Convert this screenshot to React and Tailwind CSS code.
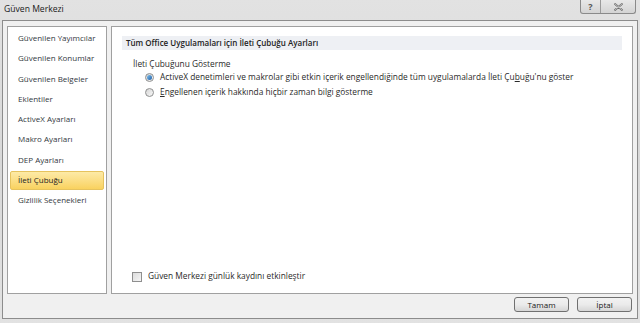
import React from "react";

const items = [
  "Güvenilen Yayımcılar",
  "Güvenilen Konumlar",
  "Güvenilen Belgeler",
  "Eklentiler",
  "ActiveX Ayarları",
  "Makro Ayarları",
  "DEP Ayarları",
  "İleti Çubuğu",
  "Gizlilik Seçenekleri",
];

export default function App() {
  return (
    <div
      className="w-[640px] h-[323px] flex flex-col bg-gradient-to-b from-[#e2e2e2] via-[#d8d8d8] to-[#e2e2e2] text-[8px] text-[#2a2a2a] overflow-hidden"
      style={{ fontFamily: '"Open Sans", "Noto Sans", sans-serif' }}
    >
      <TitleBar />
      <div className="mx-[2px] h-[299px] border border-[#8c8c8c] bg-[#f0f0f0] flex flex-col px-[4px] pt-[5px]">
        <div className="flex gap-[4px] h-[268px]">
          <Sidebar />
          <Content />
        </div>
        <div className="flex justify-end gap-[8px] pt-[3px] pr-[1px]">
          <Button label="Tamam" />
          <Button label="İptal" />
        </div>
      </div>
    </div>
  );
}

function TitleBar() {
  return (
    <div className="h-[20px] flex justify-between items-start pl-[4px] pr-[4px]">
      <span className="text-[8.6px] text-[#1a1a1a] pt-[3px]">Güven Merkezi</span>
      <div className="flex h-[14px] border border-t-0 border-[#8a8a8a] rounded-b-[3px] overflow-hidden bg-gradient-to-b from-[#e8e8e8] to-[#d4d4d4]">
        <div className="w-[20px] flex items-center justify-center border-r border-[#9a9a9a] text-[9px] font-bold text-[#555]">?</div>
        <div className="w-[34px] flex items-center justify-center">
          <svg width="9" height="8" viewBox="0 0 9 8">
            <path d="M1 1 L8 7 M8 1 L1 7" stroke="#6a6a6a" strokeWidth="1.8" strokeLinecap="round" />
            <path d="M1 1 L8 7 M8 1 L1 7" stroke="#f4f4f4" strokeWidth="0.6" strokeLinecap="round" />
          </svg>
        </div>
      </div>
    </div>
  );
}

function Sidebar() {
  return (
    <div className="w-[100px] h-full border border-[#a0a0a0] bg-white flex flex-col gap-[1.3px] pt-[1.5px] px-[2px]">
      {items.map((name) => {
        const selected = name === "İleti Çubuğu";
        return (
          <div
            key={name}
            className={
              selected
                ? "h-[19px] flex items-center pl-[7px] rounded-[2px] border border-[#e6c35e] bg-gradient-to-b from-[#fdeaa6] to-[#f9d25e] text-[#222]"
                : "h-[19px] flex items-center pl-[8px] text-[#333840]"
            }
          >
            {name}
          </div>
        );
      })}
    </div>
  );
}

function Content() {
  return (
    <div className="flex-1 h-full border border-[#a0a0a0] bg-white flex flex-col pl-[10px] pr-[10px] pt-[9px] text-[8.35px]">
      <div className="h-[14px] bg-[#eef0f4] flex items-center pl-[4px] font-semibold text-[8px] text-[#222]">
        Tüm Office Uygulamaları için İleti Çubuğu Ayarları
      </div>
      <div className="pl-[11px] pt-[8px] flex flex-col">
        <div className="h-[12px] flex items-center">İleti Çubuğunu Gösterme</div>
        <div className="pl-[12px] flex flex-col gap-[3px] pt-[1px]">
          <Radio checked>
            ActiveX denetimleri ve makrolar gibi etkin içerik engellendiğinde tüm uygulamalarda İleti Çu<u>b</u>uğu'nu göster
          </Radio>
          <Radio>
            <u>E</u>ngellenen içerik hakkında hiçbir zaman bilgi gösterme
          </Radio>
        </div>
      </div>
      <div className="mt-auto mb-[10px] pl-[10px] flex items-center gap-[6px]">
        <div className="w-[10px] h-[10px] border border-[#8f8f8f] bg-gradient-to-br from-[#dcdcdc] to-[#f6f6f6]" />
        <span>Güven Merkezi günlük kaydını etkinleştir</span>
      </div>
    </div>
  );
}

function Radio({ checked, children }) {
  return (
    <div className="h-[12px] flex items-center gap-[6px]">
      <div className="w-[9px] h-[9px] rounded-full border border-[#8e8f8f] bg-gradient-to-br from-[#d5d5d5] to-[#f8f8f8] flex items-center justify-center">
        {checked && <div className="w-[5px] h-[5px] rounded-full bg-gradient-to-br from-[#7fc0ec] to-[#1e5fa8]" />}
      </div>
      <span>{children}</span>
    </div>
  );
}

function Button({ label }) {
  return (
    <div className="w-[55px] h-[15px] rounded-[3px] border border-[#707070] bg-gradient-to-b from-[#f2f2f2] via-[#ebebeb] to-[#d6d6d6] flex items-center justify-center text-[#1a1a1a]">
      {label}
    </div>
  );
}
